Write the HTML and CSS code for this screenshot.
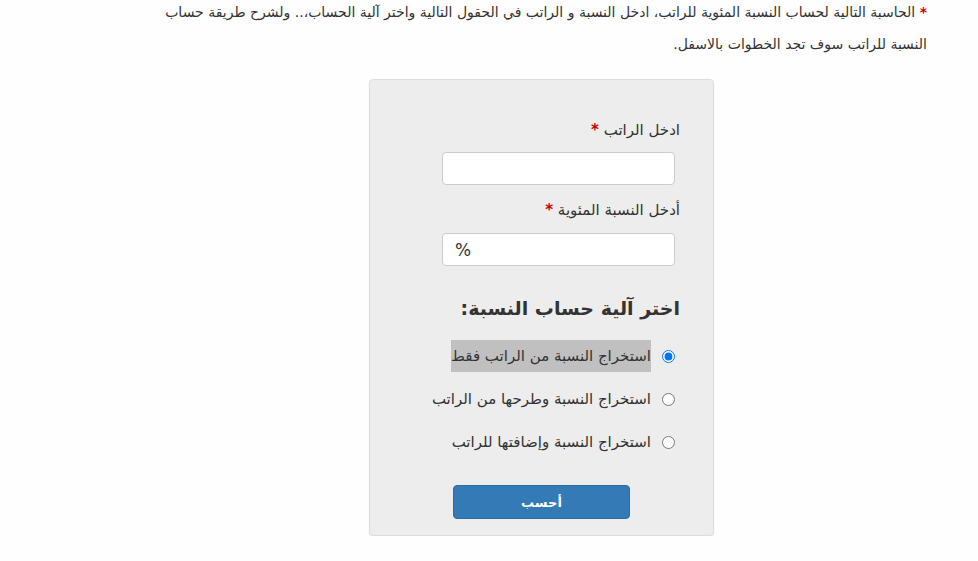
FILE: index.html
```
<!DOCTYPE html>
<html lang="ar" dir="rtl">
<head>
  <meta charset="UTF-8">
  <title>حساب النسبة المئوية للراتب</title>
  <link rel="stylesheet" href="styles.css">
</head>
<body>
  <div class="page">
    <p class="intro">
      <span class="req">*</span> الحاسبة التالية لحساب النسبة المئوية للراتب، ادخل النسبة و الراتب في الحقول التالية واختر آلية الحساب،.. ولشرح طريقة حساب النسبة للراتب سوف تجد الخطوات بالاسفل.
    </p>

    <form class="calc">
      <label class="field-label" for="salary">ادخل الراتب <span class="req">*</span></label>
      <input class="field" id="salary" type="text">

      <label class="field-label second" for="percent">أدخل النسبة المئوية <span class="req">*</span></label>
      <input class="field field-pct" id="percent" type="text" placeholder="%">

      <h3 class="calc-title">اختر آلية حساب النسبة:</h3>

      <div class="options">
        <label class="option">
          <input type="radio" name="mode" checked>
          <span class="option-text selected">استخراج النسبة من الراتب فقط</span>
        </label>
        <label class="option">
          <input type="radio" name="mode">
          <span class="option-text">استخراج النسبة وطرحها من الراتب</span>
        </label>
        <label class="option">
          <input type="radio" name="mode">
          <span class="option-text">استخراج النسبة وإضافتها للراتب</span>
        </label>
      </div>

      <div class="actions">
        <button class="btn" type="button">أحسب</button>
      </div>
    </form>
  </div>
</body>
</html>
```

FILE: styles.css
```
body {
  margin: 0;
  background: #fefefe;
  color: #333;
  font-family: Tahoma, "DejaVu Sans", sans-serif;
  font-size: 15px;
}
.page {
  padding-right: 51px;
}
.intro {
  margin: -4px 0 0;
  width: 775px;
  font-size: 14px;
  line-height: 32px;
}
.req {
  color: #c00;
  font-weight: bold;
}
.calc {
  box-sizing: border-box;
  width: 345px;
  margin: 19px 213px 0 0;
  padding: 38px 33px 16px 0;
  background: #ededed;
  border: 1px solid #ddd;
  border-radius: 4px;
  box-shadow: 0 1px 2px rgba(0,0,0,0.06);
}
.field-label {
  display: block;
  line-height: 24px;
}
.field-label.second {
  margin-top: 13px;
}
.field {
  display: block;
  box-sizing: border-box;
  width: 233px;
  height: 33px;
  margin: 10px 5px 0 0;
  border: 1px solid #ccc;
  border-radius: 4px;
  background: #fff;
  padding: 0 12px;
  font: inherit;
  font-size: 17px;
  text-align: left;
}
.field-pct {
  margin-top: 11px;
}
.field-pct::placeholder {
  color: #333;
}
.calc-title {
  margin: 27px 0 0;
  font-size: 19px;
  line-height: 30px;
  font-weight: bold;
}
.options {
  display: flex;
  flex-direction: column;
  gap: 11px;
  margin-top: 17px;
}
.option {
  display: flex;
  align-items: center;
  gap: 11px;
  margin-right: 5px;
  line-height: 32px;
}
.option input {
  margin: 0;
  width: 13px;
  height: 13px;
}
.option-text.selected {
  background: #c0c0c0;
}
.actions {
  display: flex;
  justify-content: center;
  margin: 27px -33px 0 0;
}
.btn {
  width: 177px;
  height: 34px;
  background: #337ab7;
  border: 1px solid #2e6da4;
  border-radius: 4px;
  color: #fff;
  font: inherit;
  font-size: 13px;
  font-weight: bold;
}
```
